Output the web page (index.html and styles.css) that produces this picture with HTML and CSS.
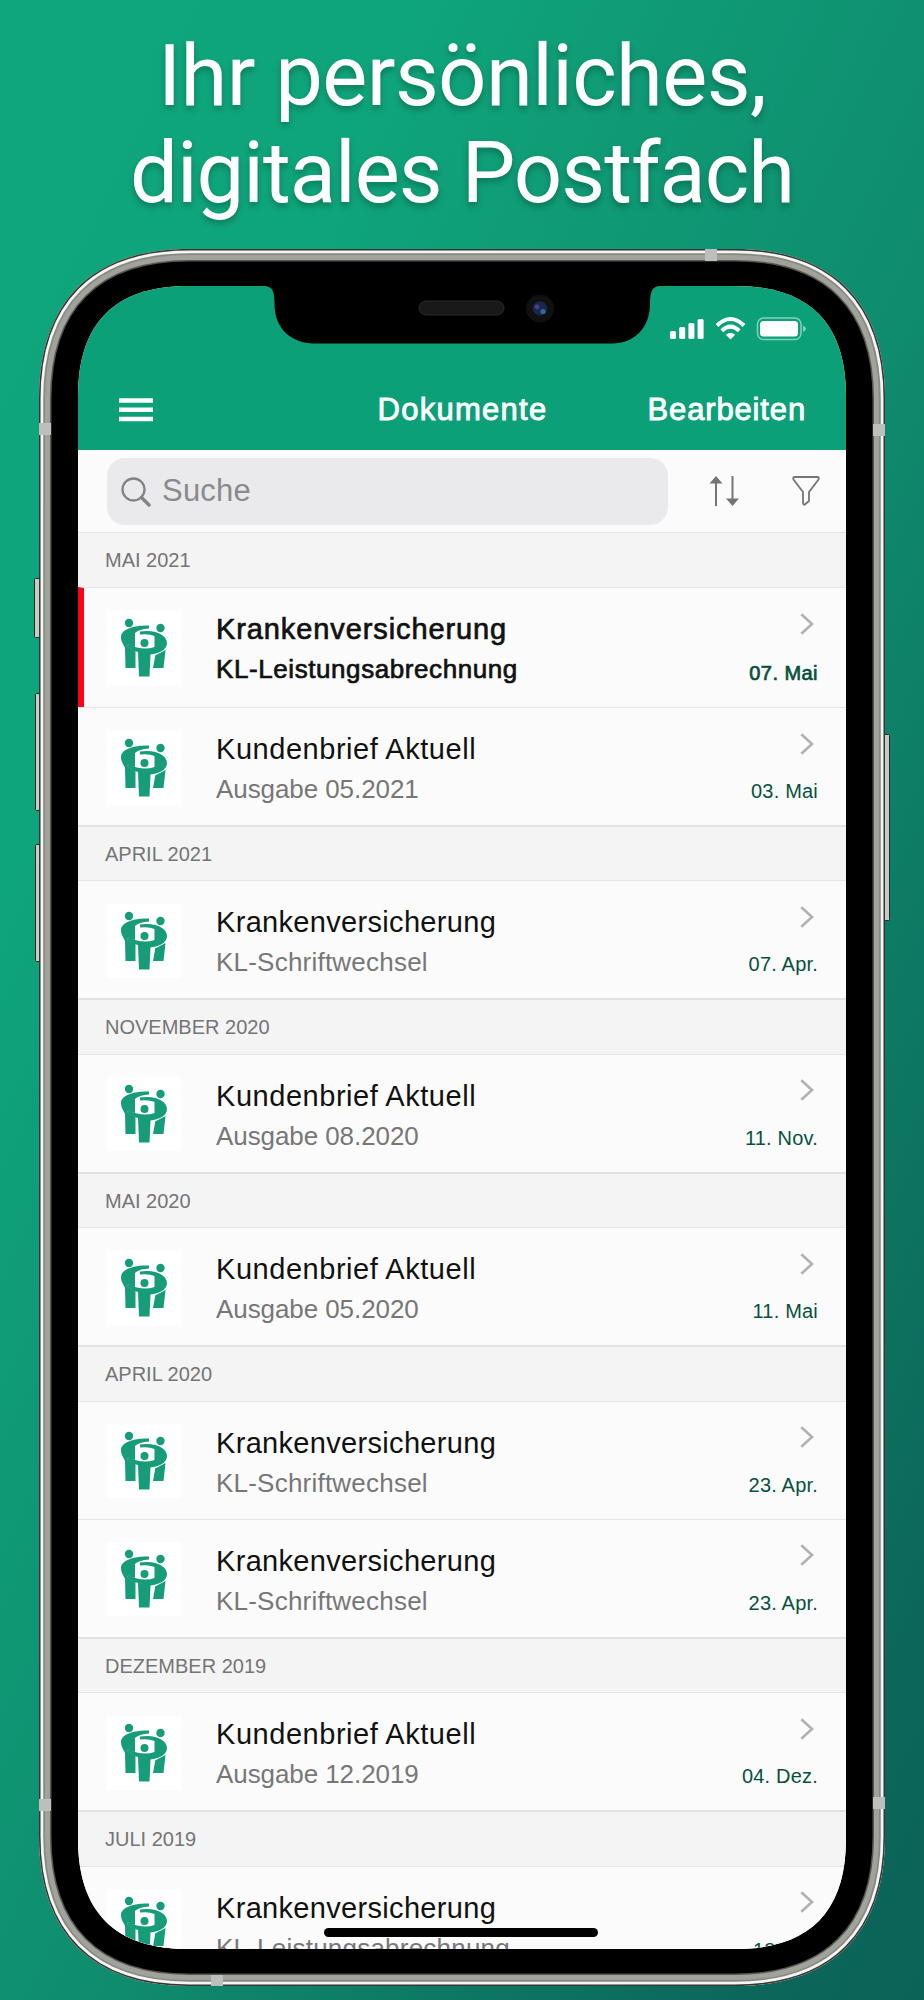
FILE: index.html
```
<!DOCTYPE html>
<html lang="de">
<head>
<meta charset="utf-8">
<title>Dokumente</title>
<link rel="stylesheet" href="styles.css">
</head>
<body>
<svg class="defs" aria-hidden="true">
  <symbol id="logo" viewBox="0 0 74 74">
    <g fill="#169c79">
      <circle cx="22" cy="12" r="4.200"/><circle cx="53.500" cy="17" r="4.200"/><circle cx="37.500" cy="32" r="4"/>
      <path d="M42 14.500C30 14 14 17 14 26C14 31 17 34 18 37L18.500 57H28.500V40Q23 38 20.500 35L21 33.500Q24 35.500 28 36V22Q32 18 42 17.500Z"/>
      <path d="M33 20.500C50 18 60 25 60 32C60 39 52 42.500 43.500 43.500L42.500 65.500H32L31 41Q24 39.500 20.500 35L21 33.500Q36 40 47.500 36V25Q42 22.500 33 23.500Z"/>
      <path d="M46 57L48 46Q47.500 44.500 49 44L58.500 39L56.500 57Z"/>
    </g>
  </symbol>
  <symbol id="chevron" viewBox="0 0 14 22"><path d="M1.300 1.200L12 11L1.300 20.800" fill="none" stroke="#b2b2b2" stroke-width="2.600"/></symbol>
</svg>
<h1 class="headline"><span class="line l1">Ihr persönliches,</span><span class="line l2">digitales Postfach</span></h1>
<main class="phone">
  <svg class="frame" viewBox="0 0 924 1760" aria-hidden="true">
    <defs>
      <path id="shell" d="M39 159C39 62 92 9 189 9H735C832 9 885 62 885 159V1596C885 1693 832 1746 735 1746H189C92 1746 39 1693 39 1596Z"/>
      <clipPath id="shellClip"><use href="#shell"/></clipPath>
    </defs>
    <g stroke="#222a26" fill="#c9cbc6">
      <rect x="34.500" y="338.500" width="6" height="59" rx="1"/><rect x="35.500" y="453.500" width="5" height="117" rx="1"/><rect x="35.500" y="604.500" width="5" height="117" rx="1"/>
      <rect x="884.500" y="494.500" width="5" height="186" rx="1"/>
    </g>
    <g clip-path="url(#shellClip)" fill="none">
      <use href="#shell" fill="#000" stroke="#55584f" stroke-width="25"/>
      <use href="#shell" stroke="#a0a29b" stroke-width="22"/>
      <use href="#shell" stroke="#868982" stroke-width="12"/>
      <use href="#shell" stroke="#f4f4f2" stroke-width="8.500"/>
      <use href="#shell" stroke="#343734" stroke-width="3"/>
    </g>
    <g fill="#bcbfbb">
      <rect x="39" y="183" width="12" height="12"/><rect x="873" y="184" width="12" height="12"/>
      <rect x="39" y="1559" width="12" height="12"/><rect x="873" y="1557" width="12" height="12"/>
      <rect x="705" y="9" width="12" height="12"/><rect x="211" y="1735" width="12" height="11"/>
    </g>
  </svg>
  <section class="screen">
    <header class="bar">
      <svg class="status" viewBox="0 0 138 26" aria-hidden="true">
        <g fill="#fff"><rect x="0" y="15" width="6" height="8" rx="1.500"/><rect x="9.200" y="11" width="6" height="12" rx="1.500"/><rect x="18.400" y="7" width="6" height="16" rx="1.500"/><rect x="27.600" y="3" width="6" height="20" rx="1.500"/><rect x="90" y="5" width="38" height="15.500" rx="3.500"/>
        <path d="M60.500 23.500L55.800 18.700Q60.500 15 65.200 18.700Z"/></g>
        <g fill="none" stroke="#fff" stroke-width="4"><path d="M47 9.500Q60.500-3.500 74 9.500"/><path d="M51.800 14.700Q60.500 6.500 69.200 14.700"/></g>
        <rect x="87.500" y="2" width="43.500" height="21.500" rx="6" fill="none" stroke="#fff" stroke-opacity=".5" stroke-width="1.500"/><path d="M133 9.500Q136 11 136 12.700Q136 14.500 133 16Z" fill="#fff" fill-opacity=".5"/>
      </svg>
      <nav class="nav">
        <svg class="menu" viewBox="0 0 34 24"><path d="M0 2.500H34M0 11.700H34M0 21H34" stroke="#fff" stroke-width="4.400"/></svg>
        <span class="title">Dokumente</span>
        <span class="edit">Bearbeiten</span>
      </nav>
    </header>
    <div class="tools">
      <div class="search">
        <svg viewBox="0 0 30 30" width="30" height="30"><circle cx="12.500" cy="12.500" r="11" fill="none" stroke="#838386" stroke-width="2.300"/><path d="M20.500 20.500L28 28" stroke="#838386" stroke-width="3.400" stroke-linecap="round"/></svg>
        <span>Suche</span>
      </div>
      <svg class="sort" viewBox="0 0 30 30"><path d="M7 6V30M23.500 0V24" stroke="#757575" stroke-width="2"/><path d="M.5 7.500L7 0L13.500 7.500ZM17 22.500L23.500 30L30 22.500Z" fill="#757575"/></svg>
      <svg class="filter" viewBox="0 0 28 30"><path d="M2 1H26Q27.300 1.500 26.500 3.500L17 16V25L12.500 28.800Q11 28.500 11 27V16L1.500 3.500Q.7 1.500 2 1Z" fill="none" stroke="#757575" stroke-width="1.800"/></svg>
    </div>
    <h2 class="first">MAI 2021</h2>
    <article class="row unread"><svg class="logo"><use href="#logo"/></svg><div class="copy"><b>Krankenversicherung</b><span>KL-Leistungsabrechnung</span></div><div class="side"><svg><use href="#chevron"/></svg><time>07. Mai</time></div></article>
    <article class="row letter"><svg class="logo"><use href="#logo"/></svg><div class="copy"><b>Kundenbrief Aktuell</b><span>Ausgabe 05.2021</span></div><div class="side"><svg><use href="#chevron"/></svg><time>03. Mai</time></div></article>
    <h2>APRIL 2021</h2>
    <article class="row"><svg class="logo"><use href="#logo"/></svg><div class="copy"><b>Krankenversicherung</b><span>KL-Schriftwechsel</span></div><div class="side"><svg><use href="#chevron"/></svg><time>07. Apr.</time></div></article>
    <h2>NOVEMBER 2020</h2>
    <article class="row letter"><svg class="logo"><use href="#logo"/></svg><div class="copy"><b>Kundenbrief Aktuell</b><span>Ausgabe 08.2020</span></div><div class="side"><svg><use href="#chevron"/></svg><time>11. Nov.</time></div></article>
    <h2>MAI 2020</h2>
    <article class="row letter"><svg class="logo"><use href="#logo"/></svg><div class="copy"><b>Kundenbrief Aktuell</b><span>Ausgabe 05.2020</span></div><div class="side"><svg><use href="#chevron"/></svg><time>11. Mai</time></div></article>
    <h2>APRIL 2020</h2>
    <article class="row"><svg class="logo"><use href="#logo"/></svg><div class="copy"><b>Krankenversicherung</b><span>KL-Schriftwechsel</span></div><div class="side"><svg><use href="#chevron"/></svg><time>23. Apr.</time></div></article>
    <article class="row"><svg class="logo"><use href="#logo"/></svg><div class="copy"><b>Krankenversicherung</b><span>KL-Schriftwechsel</span></div><div class="side"><svg><use href="#chevron"/></svg><time>23. Apr.</time></div></article>
    <h2>DEZEMBER 2019</h2>
    <article class="row letter"><svg class="logo"><use href="#logo"/></svg><div class="copy"><b>Kundenbrief Aktuell</b><span>Ausgabe 12.2019</span></div><div class="side"><svg><use href="#chevron"/></svg><time>04. Dez.</time></div></article>
    <h2>JULI 2019</h2>
    <article class="row"><svg class="logo"><use href="#logo"/></svg><div class="copy"><b>Krankenversicherung</b><span>KL-Leistungsabrechnung</span></div><div class="side"><svg><use href="#chevron"/></svg><time>18. Juli</time></div></article>
    <div class="home"></div>
  </section>
  <svg class="notch" viewBox="0 0 396 66" aria-hidden="true">
    <path d="M0-2V0C9 0 10.500 6 10.500 18C10.500 43 28 57.500 50 57.500H348C370 57.500 386 42 386 18C386 6 388 0 396 0V-2Z"/>
    <rect x="155" y="15" width="85" height="14" rx="7" fill="#191919" stroke="#2a2a2a"/>
    <circle cx="276" cy="22.500" r="14" fill="#101010"/><circle cx="276" cy="22.500" r="7.200" fill="#17284d"/><circle cx="273" cy="21" r="2.400" fill="#513c88"/><circle cx="279" cy="25.500" r="2.600" fill="#35698f"/>
  </svg>
</main>
</body>
</html>
```
FILE: styles.css
```
* { box-sizing: border-box; }
body { margin: 0; width: 924px; height: 2000px; overflow: hidden; background: linear-gradient(115deg, #0fa67c 0%, #0fa57b 22%, #0f8d6e 55%, #0c675a 90%, #0c6257 100%); font-family: "Liberation Sans", Arial, sans-serif; }
.defs { position: absolute; width: 0; height: 0; }
.headline { margin: 0; height: 240px; padding-top: 28px; color: #fff; font: 400 85px/97px Roboto, sans-serif; text-align: center; text-shadow: 0 4px 6px rgba(0,0,0,.25); }
.line { display: block; white-space: nowrap; }
.l1 { letter-spacing: -.65px; }
.l2 { letter-spacing: -1px; }
.phone { position: relative; height: 1760px; padding: 46px 78px 0; }
.frame { position: absolute; left: 0; top: 0; width: 924px; height: 1760px; }
.screen { position: relative; width: 768px; height: 1663px; background: #fbfbfb; clip-path: path("M0 110C0 37 37 0 110 0H658C731 0 768 37 768 110V1553C768 1626 731 1663 658 1663H110C37 1663 0 1626 0 1553Z"); overflow: hidden; }
.bar { height: 164px; background: #0ba077; padding-top: 30px; }
.status { display: block; width: 138px; height: 26px; margin-left: 592px; }
.nav { display: grid; grid-template-columns: 1fr auto 1fr; align-items: center; height: 40px; margin-top: 48px; padding: 0 40px 0 41px; color: #fff; font-size: 31px; line-height: 40px; letter-spacing: .85px; -webkit-text-stroke: .9px #fff; }
.menu { width: 34px; height: 24px; }
.title { letter-spacing: 1.25px; }
.edit { text-align: right; }
.tools { display: flex; align-items: flex-start; height: 82px; padding: 8px 28px 0 29px; }
.search { display: flex; align-items: center; width: 561px; flex-shrink: 0; height: 67px; padding-left: 14px; gap: 11px; border-radius: 18px; background: #eaeaec; color: #8a8a8d; font-size: 31px; }
.search span { letter-spacing: .2px; position: relative; top: -1px; }
.sort, .filter { flex-shrink: 0; height: 30px; }
.sort { width: 30px; margin: 18px 0 0 41px; }
.filter { width: 28px; margin: 18px 0 0 53px; }
h2 { margin: 0; height: 55.7px; padding: 0 27px; border-top: 2px solid #e2e2e2; background: #f4f4f4; color: #757575; font-size: 20px; font-weight: 400; line-height: 54px; }
h2.first { height: 55px; border-top-width: 1px; }
.row { display: flex; height: 117.8px; padding: 0 28px 0 28.5px; border-top: 1px solid #e5e5e5; background: #fbfbfb; }
.row.unread { height: 120px; border-left: 6px solid #ff0016; padding-left: 22.5px; }
.logo { flex-shrink: 0; width: 74px; height: 74px; margin-top: 22.5px; background: #fff; }
.copy { flex: 1; display: flex; flex-direction: column; padding: 22px 0 0 35.5px; white-space: nowrap; }
.copy b { color: #111; font-size: 29px; line-height: 38px; font-weight: 400; letter-spacing: .32px; }
.copy span { color: #777; font-size: 26px; line-height: 42px; letter-spacing: .22px; }
.letter b { letter-spacing: .54px; }
.letter .copy span { letter-spacing: -.08px; }
.unread b, .unread .copy span, .unread time { -webkit-text-stroke: .7px currentColor; }
.unread b { letter-spacing: .9px; }
.unread .copy span { color: #111; letter-spacing: .58px; }
.side { display: flex; flex-direction: column; align-items: flex-end; padding-top: 24.5px; }
.side svg { width: 14px; height: 22px; margin-right: 4.5px; }
time { margin-top: 23.5px; color: #07513f; font-size: 20px; line-height: 26px; letter-spacing: .2px; }
.unread time { margin-top: 25.500px; letter-spacing: .45px; }
.home { position: absolute; left: 246px; top: 1642px; width: 274px; height: 9px; border-radius: 5px; background: #000; }
.notch { position: absolute; left: 264px; top: 46px; width: 396px; height: 66px; overflow: visible; }
```
